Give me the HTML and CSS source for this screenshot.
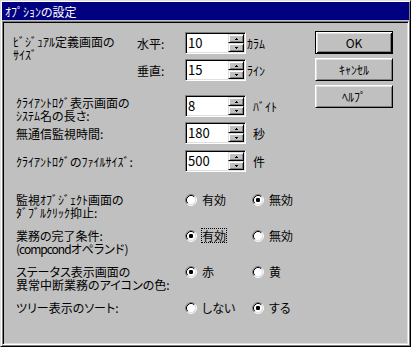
FILE: index.html
```html
<!DOCTYPE html>
<html lang="ja">
<head>
<meta charset="utf-8">
<title>オプションの設定</title>
<link rel="stylesheet" href="styles.css">
</head>
<body>
<div class="window">
  <div class="titlebar"><span class="title">ｵﾌﾟｼｮﾝの設定</span></div>
  <div class="client">
    <div class="form">
      <div class="row-a">
        <div class="label-a"><div class="ln">ﾋﾞｼﾞｭｱﾙ定義画面の</div><div class="ln">ｻｲｽﾞ</div></div>
        <div class="pairs">
          <div class="pair">
            <span class="plabel">水平:</span>
            <div class="spin"><div class="field">10</div><div class="arrows"><div class="ab"><svg class="tri" width="3" height="2" viewBox="0 0 3 2"><rect x="1" y="0" width="1" height="1"/><rect x="0" y="1" width="3" height="1"/></svg></div><div class="ab"><svg class="tri" width="3" height="2" viewBox="0 0 3 2"><rect x="0" y="0" width="3" height="1"/><rect x="1" y="1" width="1" height="1"/></svg></div></div></div>
            <span class="unit-a">ｶﾗﾑ</span>
          </div>
          <div class="pair">
            <span class="plabel">垂直:</span>
            <div class="spin"><div class="field">15</div><div class="arrows"><div class="ab"><svg class="tri" width="3" height="2" viewBox="0 0 3 2"><rect x="1" y="0" width="1" height="1"/><rect x="0" y="1" width="3" height="1"/></svg></div><div class="ab"><svg class="tri" width="3" height="2" viewBox="0 0 3 2"><rect x="0" y="0" width="3" height="1"/><rect x="1" y="1" width="1" height="1"/></svg></div></div></div>
            <span class="unit-a">ﾗｲﾝ</span>
          </div>
        </div>
      </div>

      <div class="row row-b1">
        <div class="blabel two"><div class="ln">ｸﾗｲｱﾝﾄﾛｸﾞ表示画面の</div><div class="ln">ｼｽﾃﾑ名の長さ:</div></div>
        <div class="spin"><div class="field">8</div><div class="arrows"><div class="ab"><svg class="tri" width="3" height="2" viewBox="0 0 3 2"><rect x="1" y="0" width="1" height="1"/><rect x="0" y="1" width="3" height="1"/></svg></div><div class="ab"><svg class="tri" width="3" height="2" viewBox="0 0 3 2"><rect x="0" y="0" width="3" height="1"/><rect x="1" y="1" width="1" height="1"/></svg></div></div></div>
        <span class="unit-b">ﾊﾞｲﾄ</span>
      </div>
      <div class="row row-b2">
        <div class="blabel">無通信監視時間:</div>
        <div class="spin"><div class="field">180</div><div class="arrows"><div class="ab"><svg class="tri" width="3" height="2" viewBox="0 0 3 2"><rect x="1" y="0" width="1" height="1"/><rect x="0" y="1" width="3" height="1"/></svg></div><div class="ab"><svg class="tri" width="3" height="2" viewBox="0 0 3 2"><rect x="0" y="0" width="3" height="1"/><rect x="1" y="1" width="1" height="1"/></svg></div></div></div>
        <span class="unit-b">秒</span>
      </div>
      <div class="row row-b3">
        <div class="blabel">ｸﾗｲｱﾝﾄﾛｸﾞのﾌｧｲﾙｻｲｽﾞ:</div>
        <div class="spin"><div class="field">500</div><div class="arrows"><div class="ab"><svg class="tri" width="3" height="2" viewBox="0 0 3 2"><rect x="1" y="0" width="1" height="1"/><rect x="0" y="1" width="3" height="1"/></svg></div><div class="ab"><svg class="tri" width="3" height="2" viewBox="0 0 3 2"><rect x="0" y="0" width="3" height="1"/><rect x="1" y="1" width="1" height="1"/></svg></div></div></div>
        <span class="unit-b">件</span>
      </div>

      <div class="rrow rrow-1">
        <div class="rlabel"><div class="ln">監視ｵﾌﾞｼﾞｪｸﾄ画面の</div><div class="ln">ﾀﾞﾌﾞﾙｸﾘｯｸ抑止:</div></div>
        <div class="opt first"><svg class="radio" width="12" height="12" viewBox="0 0 12 12"><circle cx="6" cy="6" r="4.5" fill="#fff"/><path d="M2.11 9.89A5.5 5.5 0 0 1 9.89 2.11" stroke="#808080" fill="none"/><path d="M9.89 2.11A5.5 5.5 0 0 1 2.11 9.89" stroke="#fff" fill="none"/><path d="M2.82 9.18A4.5 4.5 0 0 1 9.18 2.82" stroke="#000" fill="none"/><path d="M9.18 2.82A4.5 4.5 0 0 1 2.82 9.18" stroke="#dfdfdf" fill="none"/></svg><span class="otext">有効</span></div>
        <div class="opt"><svg class="radio" width="12" height="12" viewBox="0 0 12 12"><circle cx="6" cy="6" r="4.5" fill="#fff"/><path d="M2.11 9.89A5.5 5.5 0 0 1 9.89 2.11" stroke="#808080" fill="none"/><path d="M9.89 2.11A5.5 5.5 0 0 1 2.11 9.89" stroke="#fff" fill="none"/><path d="M2.82 9.18A4.5 4.5 0 0 1 9.18 2.82" stroke="#000" fill="none"/><path d="M9.18 2.82A4.5 4.5 0 0 1 2.82 9.18" stroke="#dfdfdf" fill="none"/><rect x="4" y="4" width="4" height="4" rx="1.2" fill="#000"/></svg><span class="otext">無効</span></div>
      </div>
      <div class="rrow rrow-2">
        <div class="rlabel"><div class="ln">業務の完了条件:</div><div class="ln"><span class="latin">(compcond</span>オペランド)</div></div>
        <div class="opt first"><svg class="radio" width="12" height="12" viewBox="0 0 12 12"><circle cx="6" cy="6" r="4.5" fill="#fff"/><path d="M2.11 9.89A5.5 5.5 0 0 1 9.89 2.11" stroke="#808080" fill="none"/><path d="M9.89 2.11A5.5 5.5 0 0 1 2.11 9.89" stroke="#fff" fill="none"/><path d="M2.82 9.18A4.5 4.5 0 0 1 9.18 2.82" stroke="#000" fill="none"/><path d="M9.18 2.82A4.5 4.5 0 0 1 2.82 9.18" stroke="#dfdfdf" fill="none"/><rect x="4" y="4" width="4" height="4" rx="1.2" fill="#000"/></svg><span class="otext focus">有効</span></div>
        <div class="opt"><svg class="radio" width="12" height="12" viewBox="0 0 12 12"><circle cx="6" cy="6" r="4.5" fill="#fff"/><path d="M2.11 9.89A5.5 5.5 0 0 1 9.89 2.11" stroke="#808080" fill="none"/><path d="M9.89 2.11A5.5 5.5 0 0 1 2.11 9.89" stroke="#fff" fill="none"/><path d="M2.82 9.18A4.5 4.5 0 0 1 9.18 2.82" stroke="#000" fill="none"/><path d="M9.18 2.82A4.5 4.5 0 0 1 2.82 9.18" stroke="#dfdfdf" fill="none"/></svg><span class="otext">無効</span></div>
      </div>
      <div class="rrow rrow-3">
        <div class="rlabel"><div class="ln">ステータス表示画面の</div><div class="ln">異常中断業務のアイコンの色:</div></div>
        <div class="opt first"><svg class="radio" width="12" height="12" viewBox="0 0 12 12"><circle cx="6" cy="6" r="4.5" fill="#fff"/><path d="M2.11 9.89A5.5 5.5 0 0 1 9.89 2.11" stroke="#808080" fill="none"/><path d="M9.89 2.11A5.5 5.5 0 0 1 2.11 9.89" stroke="#fff" fill="none"/><path d="M2.82 9.18A4.5 4.5 0 0 1 9.18 2.82" stroke="#000" fill="none"/><path d="M9.18 2.82A4.5 4.5 0 0 1 2.82 9.18" stroke="#dfdfdf" fill="none"/><rect x="4" y="4" width="4" height="4" rx="1.2" fill="#000"/></svg><span class="otext">赤</span></div>
        <div class="opt"><svg class="radio" width="12" height="12" viewBox="0 0 12 12"><circle cx="6" cy="6" r="4.5" fill="#fff"/><path d="M2.11 9.89A5.5 5.5 0 0 1 9.89 2.11" stroke="#808080" fill="none"/><path d="M9.89 2.11A5.5 5.5 0 0 1 2.11 9.89" stroke="#fff" fill="none"/><path d="M2.82 9.18A4.5 4.5 0 0 1 9.18 2.82" stroke="#000" fill="none"/><path d="M9.18 2.82A4.5 4.5 0 0 1 2.82 9.18" stroke="#dfdfdf" fill="none"/></svg><span class="otext">黄</span></div>
      </div>
      <div class="rrow rrow-4">
        <div class="rlabel"><div class="ln">ツリー表示のソート:</div></div>
        <div class="opt first"><svg class="radio" width="12" height="12" viewBox="0 0 12 12"><circle cx="6" cy="6" r="4.5" fill="#fff"/><path d="M2.11 9.89A5.5 5.5 0 0 1 9.89 2.11" stroke="#808080" fill="none"/><path d="M9.89 2.11A5.5 5.5 0 0 1 2.11 9.89" stroke="#fff" fill="none"/><path d="M2.82 9.18A4.5 4.5 0 0 1 9.18 2.82" stroke="#000" fill="none"/><path d="M9.18 2.82A4.5 4.5 0 0 1 2.82 9.18" stroke="#dfdfdf" fill="none"/></svg><span class="otext">しない</span></div>
        <div class="opt"><svg class="radio" width="12" height="12" viewBox="0 0 12 12"><circle cx="6" cy="6" r="4.5" fill="#fff"/><path d="M2.11 9.89A5.5 5.5 0 0 1 9.89 2.11" stroke="#808080" fill="none"/><path d="M9.89 2.11A5.5 5.5 0 0 1 2.11 9.89" stroke="#fff" fill="none"/><path d="M2.82 9.18A4.5 4.5 0 0 1 9.18 2.82" stroke="#000" fill="none"/><path d="M9.18 2.82A4.5 4.5 0 0 1 2.82 9.18" stroke="#dfdfdf" fill="none"/><rect x="4" y="4" width="4" height="4" rx="1.2" fill="#000"/></svg><span class="otext">する</span></div>
      </div>
    </div>
    <div class="buttons">
      <div class="btn default">OK</div>
      <div class="btn">ｷｬﾝｾﾙ</div>
      <div class="btn">ﾍﾙﾌﾟ</div>
    </div>
  </div>
</div>
</body>
</html>
```
FILE: styles.css
```css
* { box-sizing: border-box; }
html, body { margin: 0; padding: 0; }
body {
  background: #c0c0c0;
  font-family: "Noto Sans CJK JP", "Noto Sans", sans-serif;
  font-size: 12px;
  line-height: 13px;
  color: #000;
  font-feature-settings: "palt";
}
.ln { height: 13px; }
.latin { letter-spacing: -1px; }
.window {
  width: 411px;
  height: 347px;
  display: flex;
  flex-direction: column;
  border: 1px solid;
  border-color: #dfdfdf #000 #000 #dfdfdf;
  padding: 1px;
  box-shadow: inset 1px 1px #fff, inset -1px -1px #808080;
  background: #c0c0c0;
}
.titlebar {
  flex: none;
  height: 18px;
  background: #000080;
  color: #fff;
  padding-left: 3px;
  display: flex;
  align-items: center;
  margin-bottom: 1px;
}
.client {
  flex: 1;
  display: flex;
  border: 1px solid;
  border-color: #808080 #fff #fff #808080;
  padding: 1px;
  box-shadow: inset 1px 1px #000, inset -1px -1px #dfdfdf;
}
.form {
  flex: none;
  width: 311px;
  padding-top: 9px;
}
.buttons {
  flex: none;
  display: flex;
  flex-direction: column;
  gap: 4px;
  padding-top: 8px;
}
/* row A */
.row-a { display: flex; margin-left: 9px; }
.label-a { width: 124px; padding-top: 3px; }
.pairs { display: flex; flex-direction: column; gap: 5px; }
.pair { display: flex; align-items: center; height: 22px; }
.plabel { width: 48px; }
.unit-a { margin-left: 1px; }
/* spin box */
.spin {
  flex: none;
  width: 61px;
  height: 22px;
  display: flex;
  border: 1px solid;
  border-color: #808080 #fff #fff #808080;
  padding: 1px;
  box-shadow: inset 1px 1px #000, inset -1px -1px #dfdfdf;
  background: #fff;
}
.field { width: 41px; line-height: 18px; padding-left: 1px; font-size: 13px; }
.arrows { width: 16px; display: flex; flex-direction: column; }
.ab {
  height: 9px;
  background: #c0c0c0;
  border: 1px solid;
  border-color: #dfdfdf #000 #000 #dfdfdf;
  box-shadow: inset 1px 1px #fff, inset -1px -1px #808080;
  display: flex;
  align-items: center;
  justify-content: center;
}
.tri { display: block; fill: #000; shape-rendering: crispEdges; }
/* rows B */
.row { display: flex; align-items: center; height: 22px; margin-left: 12px; }
.row-b1 { margin-top: 14px; align-items: flex-start; }
.row-b2 { margin-top: 5px; }
.row-b3 { margin-top: 6px; }
.blabel { width: 169px; }
.blabel.two { padding-top: 1px; }
.unit-b { margin-left: 7px; }
.row-b1 .unit-b { align-self: center; }
/* radio rows */
.rrow { display: flex; align-items: flex-start; margin-left: 12px; }
.rrow-1 { margin-top: 21px; }
.rrow-2 { margin-top: 10px; }
.rrow-3 { margin-top: 10px; }
.rrow-4 { margin-top: 10px; }
.rlabel { width: 169px; height: 26px; }
.rrow-4 .rlabel { height: 13px; }
.opt { display: flex; align-items: center; height: 13px; }
.opt.first { width: 67px; }
.radio { display: block; flex: none; margin-right: 5px; }
.focus { outline: 1px dotted #000; outline-offset: 0; }
/* buttons */
.btn {
  width: 78px;
  height: 23px;
  display: flex;
  align-items: center;
  justify-content: center;
  border: 1px solid;
  border-color: #fff #000 #000 #fff;
  box-shadow: inset 1px 1px #dfdfdf, inset -1px -1px #808080;
}
.btn.default {
  border-color: #000;
  box-shadow: inset 1px 1px #fff, inset -1px -1px #000, inset 2px 2px #dfdfdf, inset -2px -2px #808080;
}
```
